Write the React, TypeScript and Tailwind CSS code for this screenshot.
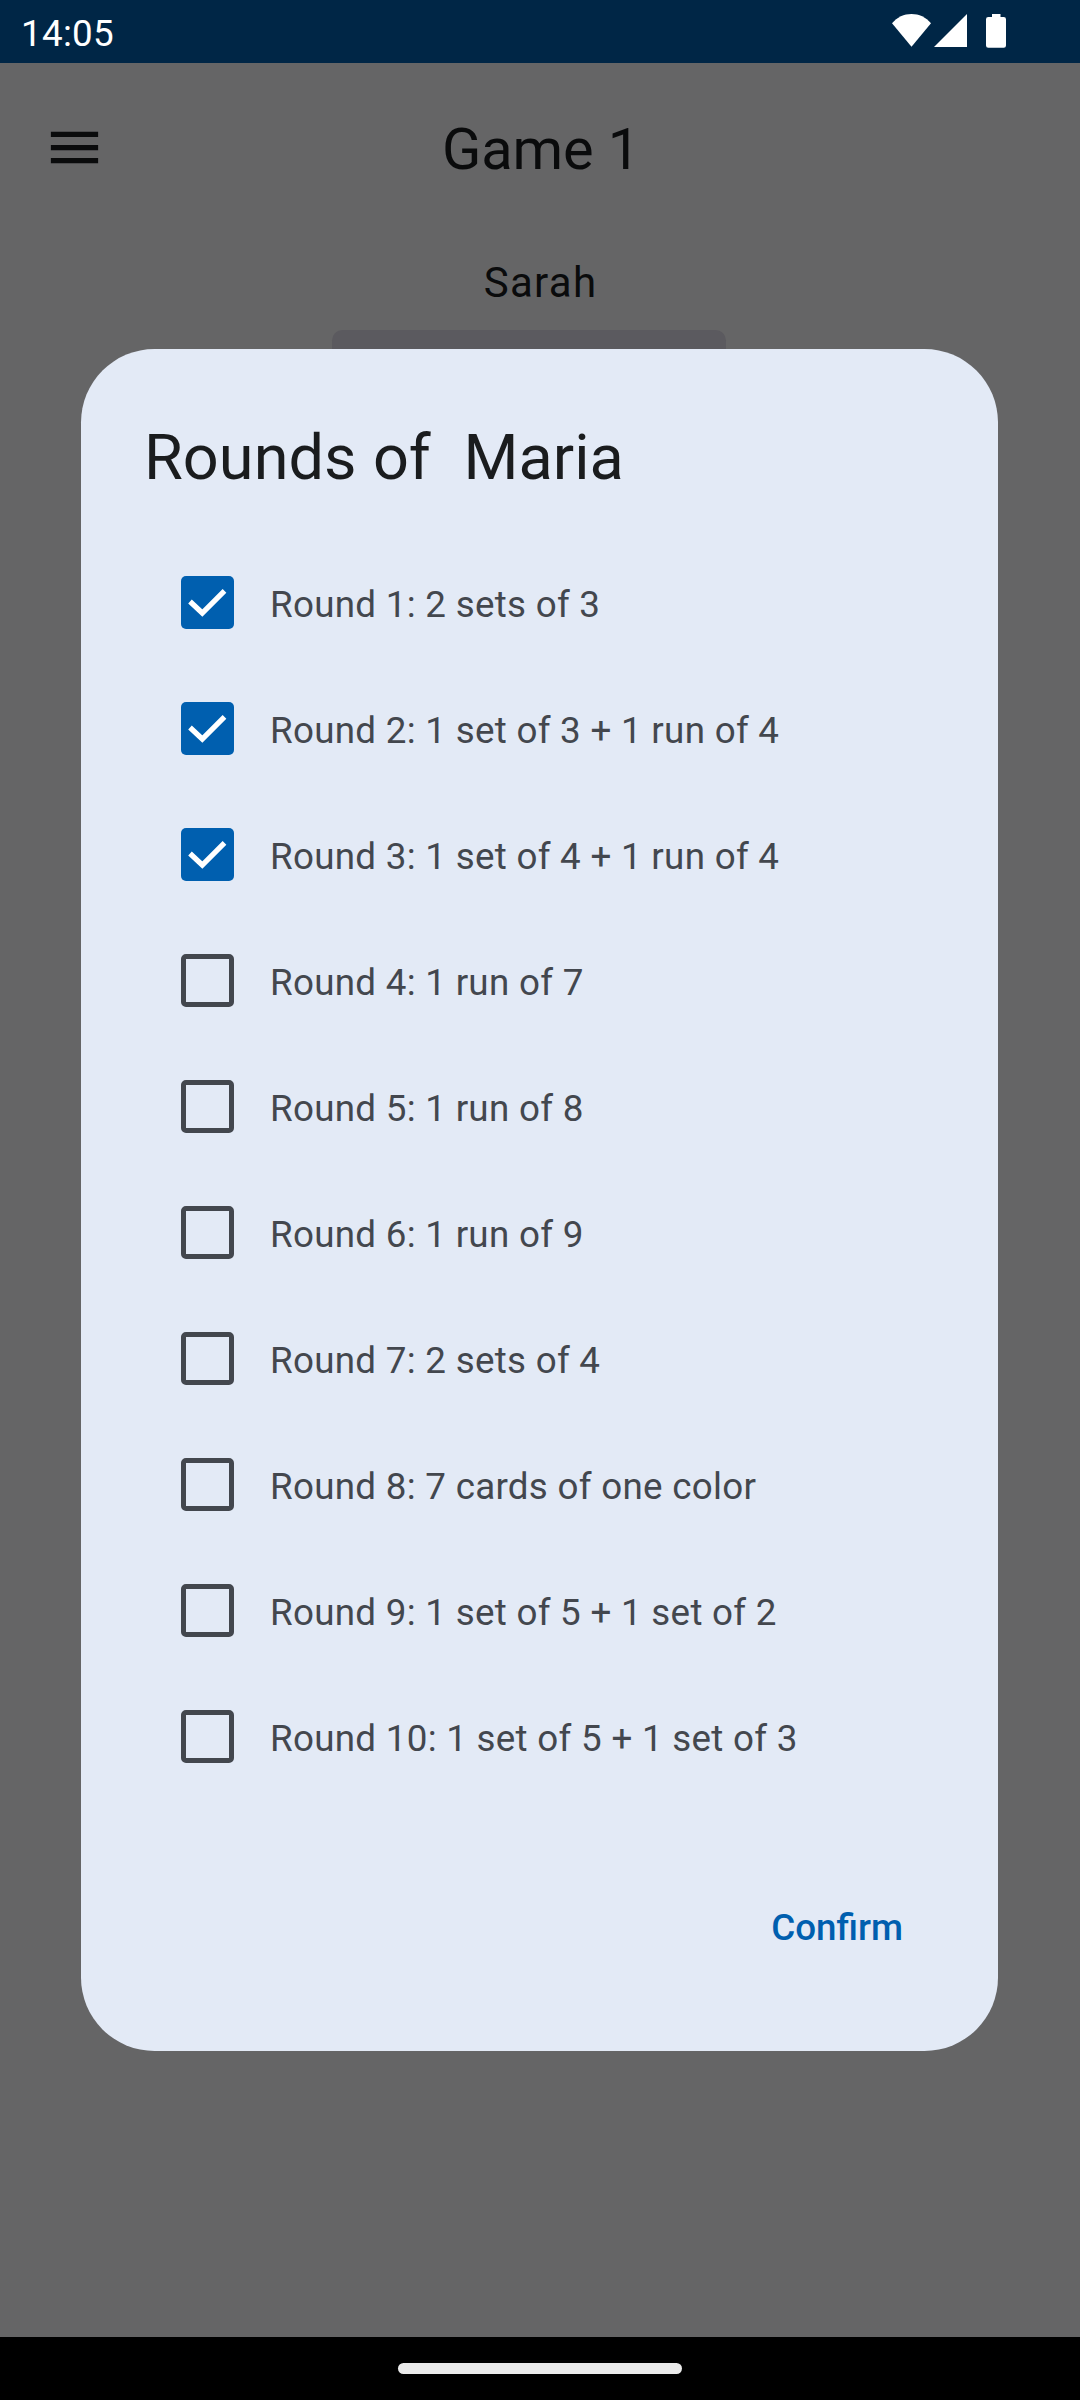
const rounds = [
  { label: "Round 1: 2 sets of 3", done: true },
  { label: "Round 2: 1 set of 3 + 1 run of 4", done: true },
  { label: "Round 3: 1 set of 4 + 1 run of 4", done: true },
  { label: "Round 4: 1 run of 7", done: false },
  { label: "Round 5: 1 run of 8", done: false },
  { label: "Round 6: 1 run of 9", done: false },
  { label: "Round 7: 2 sets of 4", done: false },
  { label: "Round 8: 7 cards of one color", done: false },
  { label: "Round 9: 1 set of 5 + 1 set of 2", done: false },
  { label: "Round 10: 1 set of 5 + 1 set of 3", done: false },
];

function StatusBar() {
  return (
    <header className="flex h-[63px] items-start justify-between bg-[#002646] pl-[21px] pr-[74px] text-white">
      <span className="pt-0.5 text-[36.75px] leading-[63px] tracking-[0.3px]">14:05</span>
      <svg className="mt-3.5 h-[34px] w-[114px]" viewBox="0 0 114 34" fill="currentColor" aria-hidden="true">
        <path d="M0 9.3C5 3.2 12 0 19.5 0S34 3.2 39 9.3L19.5 32.7Z" />
        <path d="M42 33 75 0v33Z" />
        <path d="M100 0h8.5v3h3.2a2.3 2.3 0 0 1 2.3 2.3v26.200a2.300 2.300 0 0 1-2.300 2.300H96.300a2.300 2.300 0 0 1-2.300-2.300V5.300A2.300 2.300 0 0 1 96.300 3h3.700Z" />
      </svg>
    </header>
  );
}

function Checkbox({ checked }: { checked: boolean }) {
  return (
    <span
      role="checkbox"
      aria-checked={checked}
      className={
        checked
          ? "size-[53px] shrink-0 rounded-[5px] bg-[#005faf]"
          : "size-[53px] shrink-0 rounded-[5px] border-5 border-[#43474e]"
      }
    >
      {checked && (
        <svg viewBox="0 0 53 53" className="size-[53px]" fill="none" stroke="#ffffff" strokeWidth="5.25">
          <path d="M9 25.500 21.300 37 43.500 14.800" />
        </svg>
      )}
    </span>
  );
}

function RoundsDialog() {
  return (
    <section
      role="dialog"
      className="absolute left-[81px] top-[349px] flex h-[1702px] w-[917px] flex-col rounded-[73.5px] bg-[#e3eaf6] px-[63px] pt-[67px]"
    >
      <h2 className="whitespace-pre text-[63px] leading-[84px] tracking-[0.05px] text-[#1a1c1e] [word-spacing:0.6px]">
        Rounds of  Maria
      </h2>
      <ul className="mt-[39.5px] pl-[37px]">
        {rounds.map((round) => (
          <li key={round.label} className="flex h-[126px] items-center gap-9">
            <Checkbox checked={round.done} />
            <span className="pt-1 text-[36.75px] leading-[52px] tracking-[0.29px] text-[#43474e]">
              {round.label}
            </span>
          </li>
        ))}
      </ul>
      <button className="mr-8 mt-[102.5px] self-end text-[36.75px] font-medium leading-[52px] text-[#005faf]">
        Confirm
      </button>
    </section>
  );
}

export default function App() {
  return (
    <div className="relative flex h-[2400px] w-[1080px] flex-col overflow-hidden bg-[#656566] font-['Roboto',sans-serif] text-[#0a0b0c]">
      <StatusBar />
      <main className="flex flex-1 flex-col">
        <div className="grid h-[168px] w-full grid-cols-[1fr_auto_1fr] items-center pl-11 pr-[43px]">
          <svg viewBox="0 0 24 24" className="-ml-px size-[63px]" fill="currentColor" aria-hidden="true">
            <path d="M3 18h18v-2H3v2zm0-5h18v-2H3v2zm0-7v2h18V6H3z" />
          </svg>
          <h1 className="pl-px pt-[3px] text-[57.75px] leading-[74px] tracking-[-0.1px]">Game 1</h1>
        </div>
        <p className="mt-5 pl-px text-center text-[42px] leading-[63px] tracking-[1.3px]">Sarah</p>
        <div className="ml-[332px] mt-4 h-32 w-[394px] rounded-[10.5px] bg-[#5b5a5f]" />
      </main>
      <footer className="flex h-[63px] items-center justify-center bg-black pb-px">
        <div className="h-[11px] w-[284px] rounded-full bg-[#ebebeb]" />
      </footer>
      <RoundsDialog />
    </div>
  );
}
